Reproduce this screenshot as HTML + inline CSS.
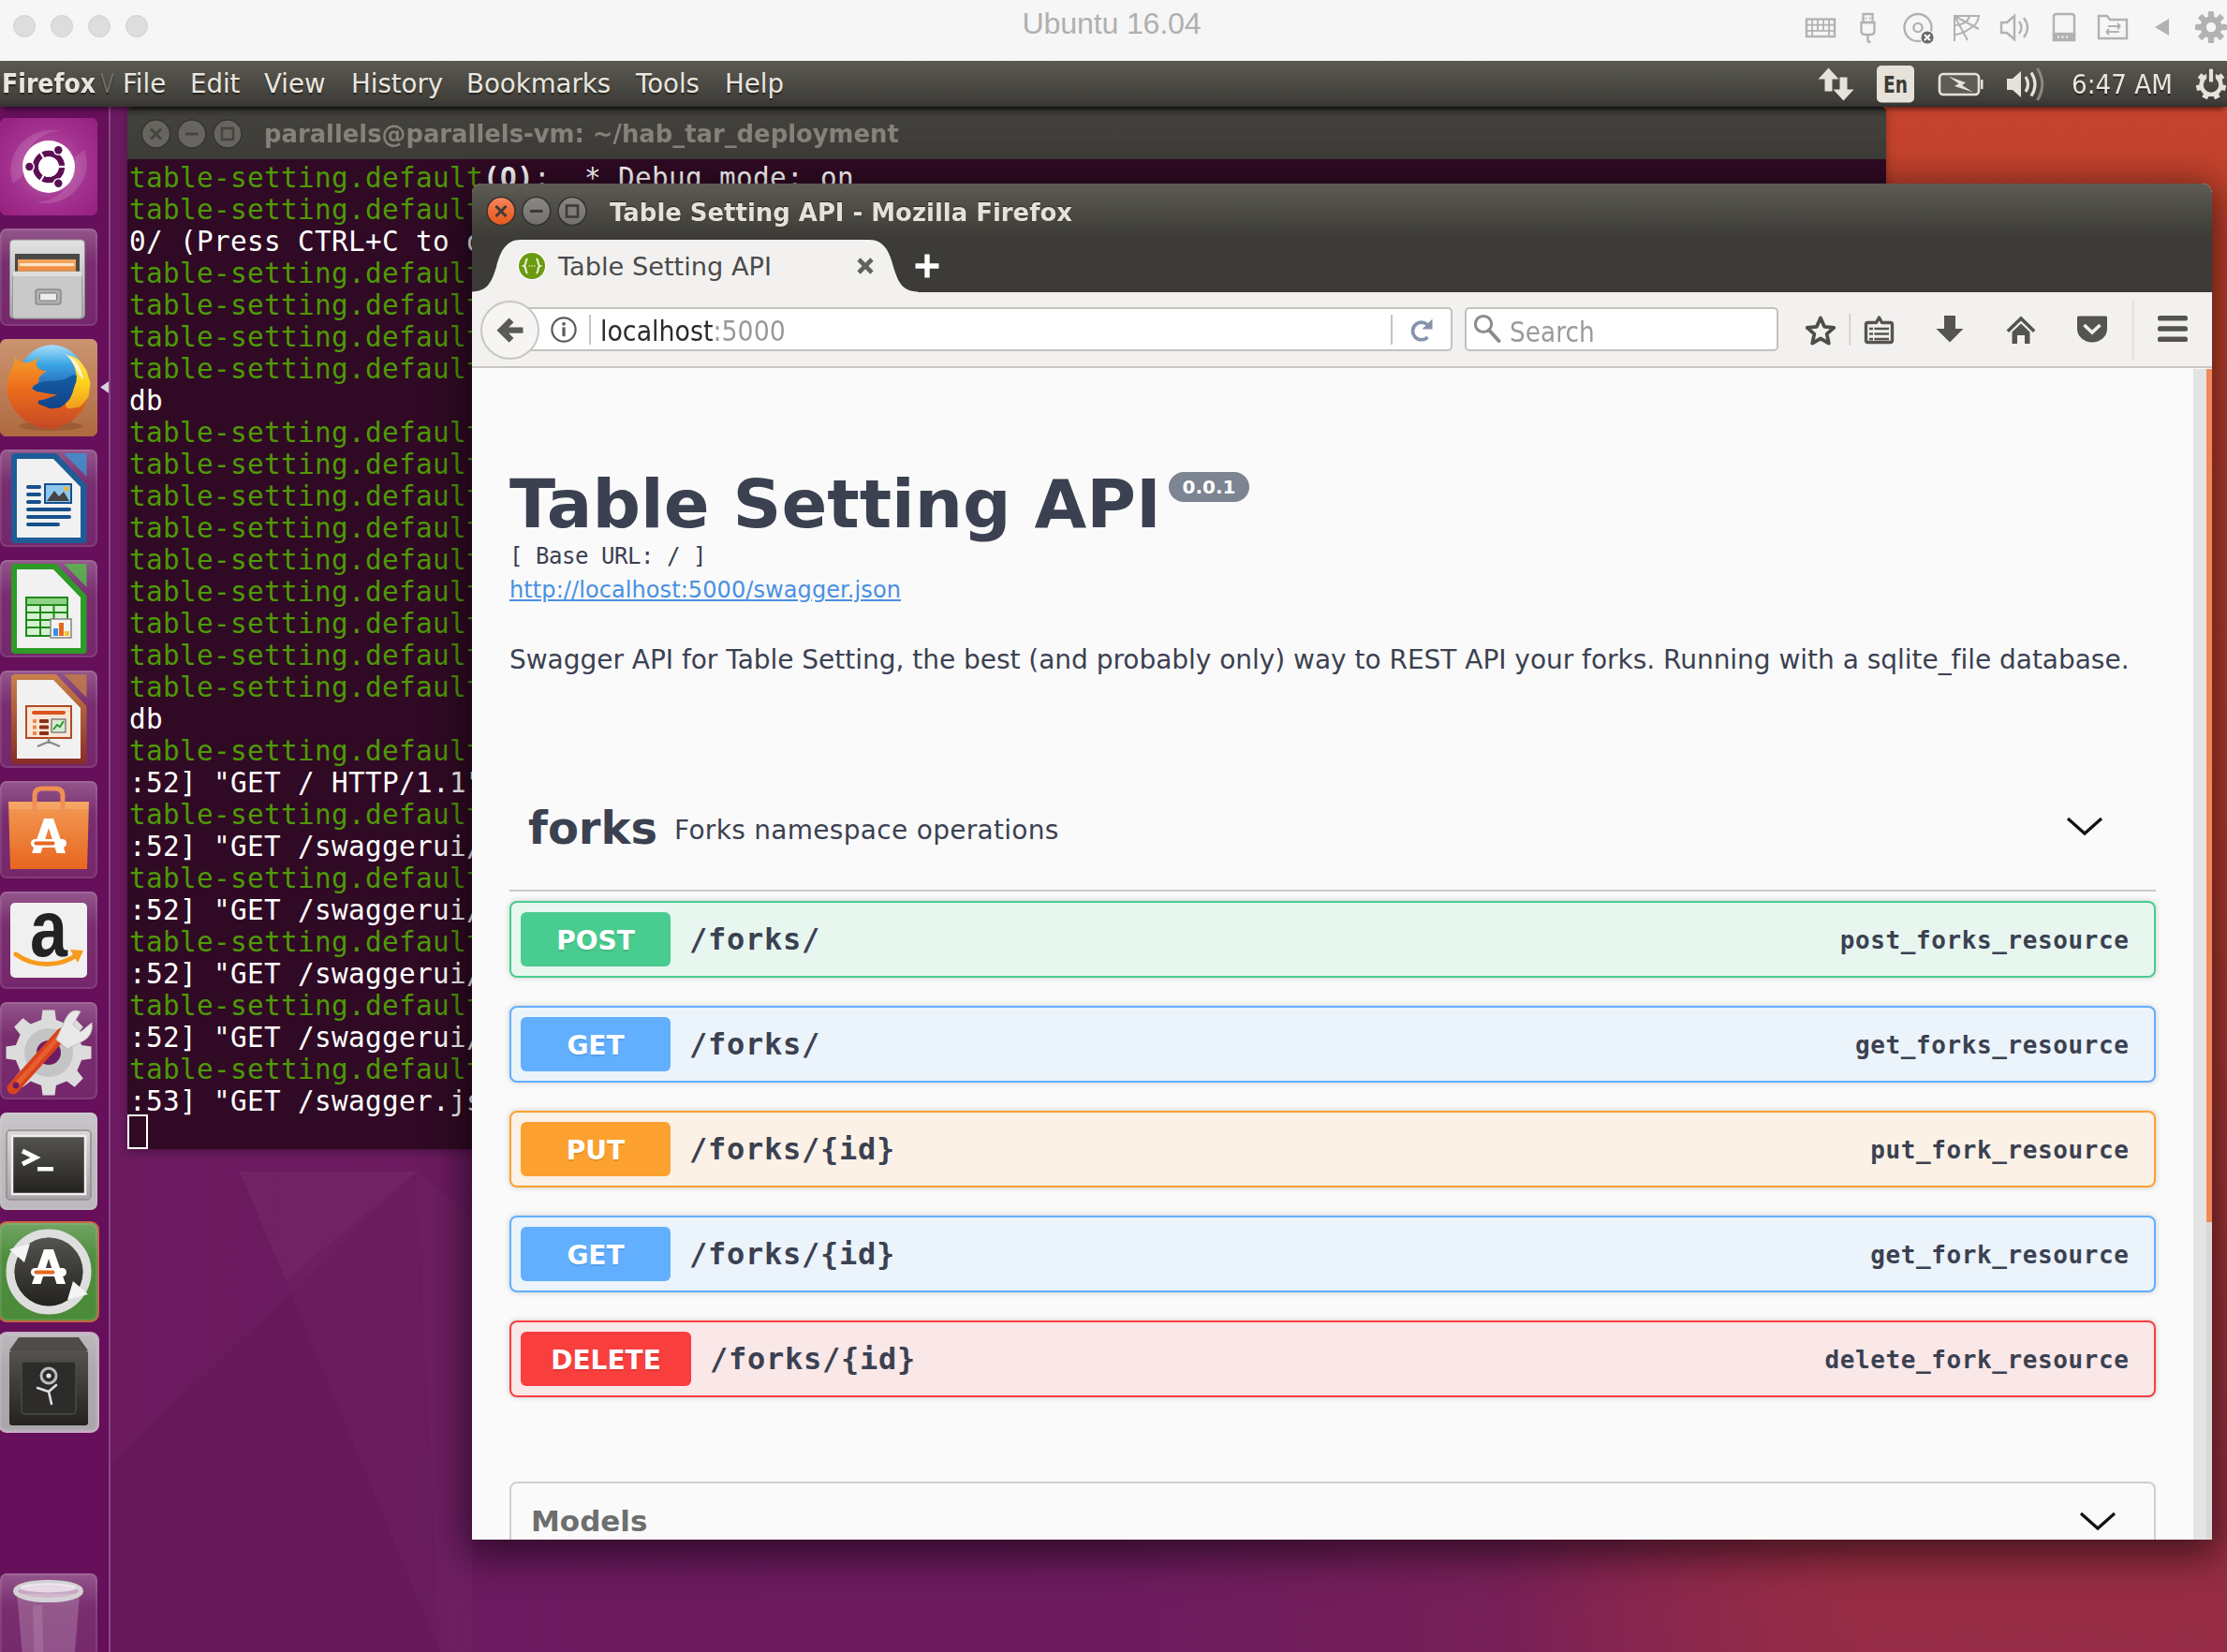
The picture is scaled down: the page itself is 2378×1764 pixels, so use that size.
<!DOCTYPE html>
<html lang="en">
<head>
<meta charset="utf-8">
<title>Ubuntu 16.04</title>
<style>
*{box-sizing:border-box}
html,body{margin:0;padding:0}
body{width:2378px;height:1764px;overflow:hidden;position:relative;background:#6b1a5f;font-family:"DejaVu Sans","Liberation Sans",sans-serif}
.abs{position:absolute}
/* wallpaper */
#wall{position:absolute;left:0;top:114px;width:2378px;height:1650px;background:linear-gradient(to right,#6b1a60 0,#6c1b5f 50%,#782058 68%,#8a264e 85%,#982d48 100%)}
#wallR{position:absolute;left:1600px;top:0;width:778px;height:1650px;background:linear-gradient(to bottom,#c4432d 0,#c2412c 10%,#b93c2d 45%,#a23338 75%,#962c47 100%);-webkit-mask-image:linear-gradient(to right,transparent 0,#000 50%);mask-image:linear-gradient(to right,transparent 0,#000 50%)}
/* mac bar */
#mac{position:absolute;left:0;top:0;width:2378px;height:65px;background:#f6f6f6}
#mac .dot{position:absolute;top:16px;width:24px;height:24px;border-radius:50%;background:#dddddd;border:1px solid #d2d2d2}
#mac .ttl{position:absolute;left:0;width:2374px;top:7px;text-align:center;font:32.2px "Liberation Sans",sans-serif;color:#b0b0b0;letter-spacing:-.2px}
/* ubuntu panel */
#panel{position:absolute;z-index:5;box-shadow:0 5px 6px -3px rgba(0,0,0,.6);left:0;top:65px;width:2378px;height:49px;background:linear-gradient(#5b5952,#403f3a 85%,#33322f);color:#e9e6df;font:27.6px "DejaVu Sans",sans-serif}
#panel span{position:absolute;top:8px;white-space:pre;text-shadow:0 2px 1px rgba(0,0,0,.45)}
/* launcher */
#launcher{position:absolute;left:0;top:114px;width:118px;height:1650px;background:#660f5b;border-right:2px solid #8a4a86;overflow:hidden}
.tile{position:absolute;left:1px;width:104px;height:104px;border-radius:12px;background:rgba(255,255,255,.16);box-shadow:inset 0 0 0 2px rgba(255,255,255,.18)}
/* terminal */
#term{position:absolute;left:136px;top:114px;width:1878px;height:1113px;background:#300a24;border-radius:6px 6px 0 0;overflow:hidden;box-shadow:0 3px 10px rgba(0,0,0,.3)}
#term .tb{position:absolute;left:0;top:0;width:100%;height:56px;background:linear-gradient(#1f1f1d 0,#3a3935 5px,#42413c 12px,#3d3c38 100%);}
#term .tb .t{position:absolute;left:146px;top:13px;font:bold 27px "DejaVu Sans",sans-serif;color:#85827b;white-space:pre;transform-origin:0 50%;transform:scaleX(.957)}
.wb{position:absolute;width:32px;height:32px;border-radius:50%}
#term pre{position:absolute;left:2px;top:59px;margin:0;font:29.33px/34px "DejaVu Sans Mono","Liberation Mono",monospace;letter-spacing:.34px;color:#fff}
#term pre .g{color:#4e9a06}
#term pre b{font-weight:bold}
/* firefox */
#ff{position:absolute;left:504px;top:196px;width:1858px;height:1448px;background:#fafafa;border-radius:10px 10px 0 0;overflow:hidden;box-shadow:0 10px 40px 8px rgba(0,0,0,.55)}
#ff .tb{position:absolute;left:0;top:0;width:100%;height:116px;background:linear-gradient(#5d5b54 0,#403f3a 50px,#3c3b37 60px,#3c3b37 100%)}
#ff .tb .t{position:absolute;left:147px;top:15px;transform-origin:0 50%;transform:scaleX(.96);font:bold 27px "DejaVu Sans",sans-serif;color:#e6e2da;white-space:pre;text-shadow:0 -1px 1px rgba(0,0,0,.5)}
#nav{position:absolute;left:0;top:116px;width:100%;height:81px;background:#f2f1f0;border-bottom:2px solid #c8c6c2}

/* firefox chrome */
#ff .tt{position:absolute;left:92px;top:73px;font:27.2px "DejaVu Sans",sans-serif;color:#4a4a48;white-space:pre}
#urlbar{position:absolute;left:50px;top:132px;width:997px;height:47px;background:#fff;border:2px solid #c4c1bd;border-radius:5px}
#urlbar .u{position:absolute;left:85px;top:7px;font:29.33px "DejaVu Sans",sans-serif;color:#2b2b2b;white-space:pre;transform-origin:0 50%;transform:scaleX(.915)}
#urlbar .u i{font-style:normal;color:#9a9a9a}
#search{position:absolute;left:1060px;top:132px;width:335px;height:47px;background:#fff;border:2px solid #c4c1bd;border-radius:5px}
#search .s{position:absolute;left:46px;top:8px;font:29.33px "DejaVu Sans",sans-serif;color:#9b9b9b;white-space:pre;transform-origin:0 50%;transform:scaleX(.9)}
#back{position:absolute;left:9px;top:125px;width:63px;height:63px;border-radius:50%;background:#f6f5f4;border:2px solid #c9c7c3}
/* swagger */
#sw{position:absolute;left:0;top:198px;width:1838px;height:1250px;background:#fafafa;color:#3b4151;font-family:"DejaVu Sans","Liberation Sans",sans-serif}
#sw .x{position:absolute;white-space:pre}
#sw h2{position:absolute;left:40px;top:102px;margin:0;font:bold 72px "DejaVu Sans",sans-serif;white-space:pre}
.mono{font-family:"DejaVu Sans Mono","Liberation Mono",monospace}
.op{position:absolute;left:40px;width:1758px;height:82px;border:2px solid;border-radius:8px;box-shadow:0 0 6px rgba(0,0,0,.19)}
.op .m{position:absolute;left:10px;top:10px;width:160px;height:58px;border-radius:6px;color:#fff;font:bold 28px/62px "DejaVu Sans",sans-serif;text-align:center;overflow:hidden;text-shadow:0 2px 0 rgba(0,0,0,.1)}
.op .p{position:absolute;left:190px;top:20px;font:bold 32px/38px "DejaVu Sans Mono",monospace;white-space:pre;letter-spacing:.74px}
.op .o{position:absolute;right:26.4px;top:24px;font:bold 26px/32px "DejaVu Sans Mono",monospace;white-space:pre;letter-spacing:.6px}
.post{border-color:#49cc90;background:#e8f6f0}.post .m{background:#49cc90}
.get{border-color:#61affe;background:#ebf3fb}.get .m{background:#61affe}
.put{border-color:#fca130;background:#fbf1e6}.put .m{background:#fca130}
.del{border-color:#f93e3e;background:#fae7e7}.del .m{background:#f93e3e;width:182px}.del .p{left:212px}
#sbt{position:absolute;left:1838px;top:198px;width:14px;height:1250px;background:#e4e4e4}
#sbh{position:absolute;left:1852px;top:198px;width:6px;height:1250px;background:#d9d8d6}
#sbh i{position:absolute;left:0;top:0;width:6px;height:911px;background:#f0885a}
</style>
</head>
<body>
<div id="wall"><div id="wallR"></div><svg class="abs" style="left:0;top:0" width="2378" height="1650" viewBox="0 114 2378 1650"><polygon points="256,1251 445,1251 305,1367" fill="rgba(255,255,255,.035)"/><polygon points="116,1566 445,1251 470,1764 116,1764" fill="rgba(0,0,0,.04)"/><polygon points="305,1367 445,1251 504,1300 504,1764 470,1764" fill="rgba(255,255,255,.02)"/></svg></div>
<div id="mac">
 <div class="dot" style="left:14px"></div><div class="dot" style="left:54px"></div><div class="dot" style="left:94px"></div><div class="dot" style="left:134px"></div>
 <div class="ttl">Ubuntu 16.04</div>
<svg class="abs" style="left:1900px;top:0" width="478" height="65" viewBox="0 0 478 65" fill="none" stroke="#b2b2b2" stroke-width="2.4">
 <g><rect x="29" y="20.5" width="30" height="18.5"/><path d="M29 26.6 h30 M29 32.8 h30 M35 20.5 v12.3 M41 20.5 v12.3 M47 20.5 v12.3 M53 20.5 v12.3 M35 32.8 v6 M53 32.8 v6" stroke-width="1.8"/></g>
 <g><rect x="89.5" y="15" width="10" height="9"/><path d="M87.5 24 h14 v9 q0 4 -4 4 h-6 q-4 0 -4 -4 Z M94.5 37 v6 q0 2 3 2"/><path d="M92.5 18.5 v2 M96.5 18.5 v2" stroke-width="1.6"/></g>
 <g><circle cx="148" cy="29.5" r="14.5"/><circle cx="148" cy="29.5" r="4.6"/></g>
 <circle cx="158" cy="40" r="7.2" fill="#6a6a6a" stroke="#f6f6f6" stroke-width="1.2"/><path d="M155 37 l6 6 M161 37 l-6 6" stroke="#fff" stroke-width="2"/>
 <g stroke-width="2"><path d="M187 16 V44 M186 17 L214 17 M187 17 L201 43 M187 17 L213 31 M213 17 C 212 26 207 28 204 30 C 200 33 196 36 188 37 M203 17 C 202 22 198 26 188 27"/></g>
 <g><path d="M237 24 h6 l8 -7 v25 l-8 -7 h-6 Z"/><path d="M256 23 q5 6.5 0 13 M261 19 q8 10.5 0 21"/></g>
 <g><path d="M293 42 V18 q0 -3 3 -3 h16 q3 0 3 3 V42 Z"/><rect x="293" y="36" width="22" height="7" fill="#b2b2b2"/></g><path d="M297 39.5 h2 M301.5 39.5 h2 M306 39.5 h2" stroke="#f6f6f6" stroke-width="2"/>
 <g><path d="M341 41 V17 h9 l3 4 h18 V41 Z"/><path d="M349 34 h14 M349 34 l3 -3 M349 34 l3 3 M364 28 h-13 M364 28 l-3 -3 M364 28 l-3 3" stroke-width="1.8"/></g>
 <path d="M416 20 V38 L401 29 Z" fill="#b2b2b2" stroke="none"/>
 <g fill="#b2b2b2" stroke="none"><circle cx="461" cy="29" r="11.5"/><g transform="translate(461 29)"><rect x="-3.2" y="-17" width="6.4" height="34" rx="1.5"/><rect x="-3.2" y="-17" width="6.4" height="34" rx="1.5" transform="rotate(45)"/><rect x="-3.2" y="-17" width="6.4" height="34" rx="1.5" transform="rotate(90)"/><rect x="-3.2" y="-17" width="6.4" height="34" rx="1.5" transform="rotate(135)"/></g><circle cx="461" cy="29" r="5.2" fill="#f6f6f6"/></g>
</svg>
</div>
<div id="panel">
 <span style="left:2px;font-weight:bold;transform-origin:0 50%;transform:scaleX(.915)">Firefox</span><span style="left:107px;color:#6f6c66;transform-origin:0 50%;transform:scaleX(.8)">V</span>
 <span style="left:131px">File</span><span style="left:203px">Edit</span><span style="left:282px">View</span><span style="left:375px">History</span><span style="left:498px">Bookmarks</span><span style="left:679px">Tools</span><span style="left:774px">Help</span>
 <span style="left:2212px;top:9px;transform-origin:0 50%;transform:scaleX(.95)">6:47 AM</span>
<svg class="abs" style="left:1900px;top:0" width="478" height="49" viewBox="0 0 478 49">
 <g fill="#e6e2da"><path d="M52.5 7.5 L63.5 19.5 H56.5 V32.5 H48.5 V19.5 H41.5 Z"/><path d="M68.5 42.5 L57.5 30.5 H64.5 V17.5 H72.5 V30.5 H79.5 Z"/></g>
 <rect x="104" y="5" width="40" height="39.5" rx="5" fill="#e6e2da"/>
 <text x="124" y="34" text-anchor="middle" font-family="DejaVu Sans,Liberation Sans,sans-serif" font-size="24" font-weight="bold" fill="#3c3b37" textLength="26" lengthAdjust="spacingAndGlyphs">En</text>
 <g><rect x="171" y="14" width="42" height="22" rx="4" fill="#5e5c57" stroke="#e6e2da" stroke-width="2.6"/><path d="M215 20 h2.5 v10 h-2.5 Z" fill="#e6e2da"/><path d="M180.5 16.5 L199 23.2 L195 26 L207 33.5 L187 27 L191.5 24.2 Z" fill="#e6e2da"/></g>
 <g><path d="M243 19 h6 l9 -8 v28 l-9 -8 h-6 Z" fill="#e6e2da"/><path d="M263 17 q5 8 0 16 M269 12.5 q8 12.5 0 25" fill="none" stroke="#e6e2da" stroke-width="3.2"/><path d="M275.5 8 q10.5 17 0 34" fill="none" stroke="#8b8882" stroke-width="3"/></g>
 <g transform="translate(461 25.5)"><circle r="10.4" fill="none" stroke="#e6e2da" stroke-width="4.4"/><g fill="#e6e2da"><rect x="-3" y="-16" width="6" height="7" transform="rotate(0.0)"/><rect x="-3" y="-16" width="6" height="7" transform="rotate(51.4)"/><rect x="-3" y="-16" width="6" height="7" transform="rotate(102.9)"/><rect x="-3" y="-16" width="6" height="7" transform="rotate(154.3)"/><rect x="-3" y="-16" width="6" height="7" transform="rotate(205.7)"/><rect x="-3" y="-16" width="6" height="7" transform="rotate(257.1)"/><rect x="-3" y="-16" width="6" height="7" transform="rotate(308.6)"/></g><rect x="-4.8" y="-18" width="9.6" height="15" fill="#4c4a45"/><rect x="-2.1" y="-17" width="4.2" height="14" rx="1" fill="#e6e2da"/></g>
</svg>
</div>
<div id="launcher">
<svg width="0" height="0" style="position:absolute"><defs>
<linearGradient id="lgGrey" x1="0" y1="0" x2="0" y2="1"><stop offset="0" stop-color="#e2e2e2"/><stop offset="1" stop-color="#a6a6a6"/></linearGradient>
<linearGradient id="lgTile" x1="0" y1="0" x2="0" y2="1"><stop offset="0" stop-color="rgba(255,255,255,.22)"/><stop offset=".35" stop-color="rgba(255,255,255,.03)"/><stop offset="1" stop-color="rgba(255,255,255,0)"/></linearGradient>
<radialGradient id="rgDash" cx=".5" cy=".5" r=".7"><stop offset="0" stop-color="#bd66b0"/><stop offset=".55" stop-color="#a3318f"/><stop offset="1" stop-color="#961f7e"/></radialGradient>
<linearGradient id="lgOr" x1="0" y1="0" x2="0" y2="1"><stop offset="0" stop-color="#f39a55"/><stop offset="1" stop-color="#e8661f"/></linearGradient>
<radialGradient id="rgFx" cx=".55" cy=".4" r=".6"><stop offset="0" stop-color="#5fc0ea"/><stop offset=".6" stop-color="#2a6fb8"/><stop offset="1" stop-color="#1c3f8a"/></radialGradient>
<linearGradient id="lgFox" x1="0" y1="0" x2="1" y2="1"><stop offset="0" stop-color="#f6a623"/><stop offset=".5" stop-color="#ee7a1c"/><stop offset="1" stop-color="#d9531a"/></linearGradient>
<linearGradient id="lgImp" x1="0" y1="0" x2="0" y2="1"><stop offset="0" stop-color="#c9804a"/><stop offset="1" stop-color="#872c24"/></linearGradient>
<linearGradient id="lgDark" x1="0" y1="0" x2="0" y2="1"><stop offset="0" stop-color="#55534f"/><stop offset="1" stop-color="#23221f"/></linearGradient>
<linearGradient id="lgLt" x1="0" y1="0" x2="0" y2="1"><stop offset="0" stop-color="#d9d7d9"/><stop offset="1" stop-color="#a9a4a9"/></linearGradient>
</defs></svg>
<svg class="abs" style="left:-2px;top:10px" width="108" height="108" viewBox="-2 -2 108 108"><rect x="0" y="0" width="104" height="104" rx="7" fill="rgba(255,255,255,.10)"/><rect x="0" y="0" width="104" height="104" rx="7" fill="url(#lgTile)"/><rect x="1" y="1" width="102" height="102" rx="6" fill="none" stroke="rgba(255,255,255,.10)" stroke-width="2"/><rect x="0" y="0" width="104" height="104" rx="7" fill="url(#rgDash)"/><path d="M14 70 C2 40 30 6 66 14 C40 14 22 36 24 62 Z M90 34 C102 64 74 98 38 90 C64 90 82 68 80 42 Z" fill="rgba(255,255,255,.13)"/><circle cx="52" cy="52" r="28" fill="#fff"/><circle cx="52" cy="52" r="14" fill="none" stroke="#5c0f55" stroke-width="6.4"/><path d="M52 52 L71.0 52.0" stroke="#fff" stroke-width="2.2"/><path d="M52 52 L42.5 35.5" stroke="#fff" stroke-width="2.2"/><path d="M52 52 L42.5 68.5" stroke="#fff" stroke-width="2.2"/><circle cx="31.4" cy="52.0" r="5.6" fill="#fff"/><circle cx="31.4" cy="52.0" r="4.2" fill="#5c0f55"/><circle cx="62.3" cy="34.2" r="5.6" fill="#fff"/><circle cx="62.3" cy="34.2" r="4.2" fill="#5c0f55"/><circle cx="62.3" cy="69.8" r="5.6" fill="#fff"/><circle cx="62.3" cy="69.8" r="4.2" fill="#5c0f55"/><circle cx="52" cy="52" r="10.8" fill="#fff"/></svg>
<svg class="abs" style="left:-2px;top:128px" width="108" height="108" viewBox="-2 -2 108 108"><rect x="0" y="0" width="104" height="104" rx="7" fill="rgba(255,255,255,.10)"/><rect x="0" y="0" width="104" height="104" rx="7" fill="url(#lgTile)"/><rect x="1" y="1" width="102" height="102" rx="6" fill="none" stroke="rgba(255,255,255,.10)" stroke-width="2"/><rect x="10.5" y="12" width="80" height="84" rx="4" fill="url(#lgGrey)" stroke="#8c8c8c" stroke-width="1"/><rect x="16" y="27" width="69" height="20" fill="#4b4946"/><path d="M19 33 h62 v14 h-62 Z" fill="#f2a35a"/><path d="M21 37 h58 v3 h-58 Z" fill="#fce3c4"/><path d="M19 41 h62 v6 h-62 Z" fill="#ee8f45"/><rect x="13.5" y="46" width="74" height="50" rx="3" fill="#c9c9c9" stroke="#9a9a9a"/><rect x="13.5" y="46" width="74" height="5" fill="#dedede"/><rect x="38" y="65" width="27" height="16" rx="3" fill="#b0b0b0" stroke="#8a8a8a" stroke-width="1.5"/><rect x="42.5" y="69" width="18" height="8" rx="1.5" fill="#ececec" stroke="#777" stroke-width="1"/></svg>
<svg class="abs" style="left:-2px;top:246px" width="108" height="108" viewBox="-2 -2 108 108"><rect x="0" y="0" width="104" height="104" rx="7" fill="#bf7a52"/><rect x="1" y="1" width="102" height="102" rx="6" fill="none" stroke="rgba(255,255,255,.10)" stroke-width="2"/><defs><linearGradient id="fxT" x1="0" y1="0" x2="0" y2="1"><stop offset="0" stop-color="#cb9472"/><stop offset="1" stop-color="#af6a3e"/></linearGradient><linearGradient id="fxG" x1="0" y1="0" x2="0" y2="1"><stop offset="0" stop-color="#a8defa"/><stop offset=".3" stop-color="#3aa7e4"/><stop offset=".6" stop-color="#2a6fc0"/><stop offset="1" stop-color="#1a1f6a"/></linearGradient><linearGradient id="fxF" x1="0" y1="0" x2="0" y2="1"><stop offset="0" stop-color="#f5a02a"/><stop offset=".45" stop-color="#ec6d1c"/><stop offset="1" stop-color="#c64824"/></linearGradient><linearGradient id="fxY" x1="0" y1="0" x2="0" y2="1"><stop offset="0" stop-color="#fde860"/><stop offset=".5" stop-color="#fbd41c"/><stop offset="1" stop-color="#f39a1e"/></linearGradient></defs><rect x="0" y="0" width="104" height="104" rx="7" fill="url(#fxT)"/><ellipse cx="54" cy="93" rx="34" ry="5" fill="rgba(80,30,10,.22)"/><circle cx="55.5" cy="40.9" r="34.6" fill="url(#fxG)"/><path d="M37.0 50.4 C39.3 47.6 38.0 48.3 44.1 46.4 C50.1 44.6 47.2 45.9 55.1 44.8 C62.9 43.8 59.8 45.4 67.7 43.3 C75.5 41.2 74.1 38.6 78.7 38.6 C83.3 38.6 81.2 39.1 81.4 43.3 C81.7 47.5 81.4 44.8 79.5 51.1 C77.5 57.4 78.9 56.0 75.5 62.2 C72.1 68.3 75.0 65.6 69.2 69.6 C63.5 73.6 65.6 73.5 58.2 74.1 C50.9 74.8 53.0 74.0 47.2 71.6 C41.4 69.2 40.4 69.4 40.9 66.9 C41.4 64.4 42.0 66.6 48.8 64.1 C55.6 61.6 61.4 59.4 61.4 59.4 C61.4 59.4 55.3 59.0 47.2 57.4 C39.1 55.9 40.4 57.0 37.0 54.7 C33.6 52.3 34.6 53.1 37.0 50.4 Z" fill="#0d4f90" opacity=".75"/><path d="M16.1 17.5 C16.1 17.5 17.0 24.8 26.0 25.2 C34.9 25.5 42.9 18.5 42.9 18.5 C42.9 18.5 36.8 23.9 39.3 29.1 C41.8 34.4 50.4 34.2 50.4 34.2 C50.4 34.2 46.0 36.1 42.9 40.1 C39.7 44.2 43.4 43.0 40.9 46.4 C38.4 49.8 36.7 47.6 35.4 50.4 C34.1 53.1 33.0 52.3 37.0 54.7 C40.9 57.0 39.1 55.9 47.2 57.4 C55.3 59.0 61.4 59.4 61.4 59.4 C61.4 59.4 55.6 61.6 48.8 64.1 C42.0 66.6 41.4 64.4 40.9 66.9 C40.4 69.4 41.4 69.2 47.2 71.6 C53.0 74.0 50.9 74.8 58.2 74.1 C65.6 73.5 63.5 73.6 69.2 69.6 C75.0 65.6 72.1 68.3 75.5 62.2 C78.9 56.0 77.4 57.4 79.5 51.1 C81.6 44.8 81.3 48.5 81.8 43.3 C82.3 38.0 82.3 41.2 81.0 35.4 C79.7 29.6 80.5 31.7 77.9 26.0 C75.3 20.2 73.2 18.1 73.2 18.1 C73.2 18.1 75.3 16.9 80.3 20.1 C85.2 23.2 83.4 20.9 88.1 27.5 C92.8 34.2 91.9 31.5 94.4 40.1 C96.9 48.8 96.6 44.1 95.6 53.5 C94.5 62.9 95.9 58.7 91.3 68.5 C86.7 78.2 89.7 74.7 81.8 82.6 C74.0 90.5 77.6 87.8 67.7 92.1 C57.7 96.3 62.9 95.6 51.9 95.4 C40.9 95.1 45.1 96.0 34.6 91.3 C24.1 86.5 28.3 89.2 20.5 81.0 C12.6 72.9 15.2 76.8 11.0 66.9 C6.8 56.9 8.1 61.1 7.9 51.1 C7.6 41.2 7.9 45.4 10.2 37.0 C12.6 28.6 13.0 32.5 14.9 26.0 C16.9 19.5 16.1 17.5 16.1 17.5 Z" fill="url(#fxF)"/><path d="M77.9 26.0 C75.3 20.2 73.2 18.1 73.2 18.1 C73.2 18.1 75.3 16.9 80.3 20.1 C85.2 23.2 83.4 20.9 88.1 27.5 C92.8 34.2 91.9 31.5 94.4 40.1 C96.9 48.8 96.9 44.6 95.6 53.5 C94.3 62.4 96.1 60.2 90.5 66.9 C84.8 73.6 85.5 72.3 78.7 73.6 C71.9 74.9 71.1 74.6 70.0 70.8 C69.0 67.0 72.4 68.7 75.5 62.2 C78.7 55.6 77.4 57.4 79.5 51.1 C81.6 44.8 81.3 48.5 81.8 43.3 C82.3 38.0 82.3 41.2 81.0 35.4 C79.7 29.6 80.5 31.7 77.9 26.0 Z" fill="url(#fxY)"/><path d="M69.2 15.3 C69.2 15.3 74.0 17.2 79.5 22.8 C85.0 28.5 82.6 25.4 85.8 32.3 C88.9 39.1 88.9 43.3 88.9 43.3 C88.9 43.3 88.4 43.8 85.0 38.6 C81.6 33.3 82.3 33.6 78.7 27.5 C75.0 21.5 77.1 24.5 74.0 20.5 C70.8 16.4 69.2 15.3 69.2 15.3 Z" fill="#fff6d8" opacity=".9"/></svg>
<svg class="abs" style="left:-2px;top:364px" width="108" height="108" viewBox="-2 -2 108 108"><rect x="0" y="0" width="104" height="104" rx="7" fill="rgba(255,255,255,.10)"/><rect x="0" y="0" width="104" height="104" rx="7" fill="url(#lgTile)"/><rect x="1" y="1" width="102" height="102" rx="6" fill="none" stroke="rgba(255,255,255,.10)" stroke-width="2"/><path d="M12 8 Q12 4 16 4 L60 4 L92.5 38 L92.5 96 Q92.5 100 88.5 100 L16 100 Q12 100 12 96 Z" fill="#1d5c96"/><path d="M18 10 L57 10 L86 40 L86 94 L18 94 Z" fill="#f1f1f1"/><path d="M68 4 L92.5 4 L92.5 29 Z" fill="#3f8fd0" opacity=".85"/><g fill="#16508c"><rect x="28" y="38" width="16" height="4" rx="2"/><rect x="28" y="46" width="16" height="4" rx="2"/><rect x="28" y="54" width="16" height="4" rx="2"/><rect x="28" y="62" width="48" height="4" rx="2"/><rect x="28" y="70" width="48" height="4" rx="2"/><rect x="28" y="78" width="36" height="4" rx="2"/></g><rect x="48" y="37" width="28" height="20" fill="#8ec6ee" stroke="#16508c" stroke-width="2"/><path d="M50 55 L58 44 L63 50 L68 45 L74 55 Z" fill="#444"/><circle cx="71" cy="42" r="2.5" fill="#f5b42a"/></svg>
<svg class="abs" style="left:-2px;top:482px" width="108" height="108" viewBox="-2 -2 108 108"><rect x="0" y="0" width="104" height="104" rx="7" fill="rgba(255,255,255,.10)"/><rect x="0" y="0" width="104" height="104" rx="7" fill="url(#lgTile)"/><rect x="1" y="1" width="102" height="102" rx="6" fill="none" stroke="rgba(255,255,255,.10)" stroke-width="2"/><path d="M12 8 Q12 4 16 4 L60 4 L92.5 38 L92.5 96 Q92.5 100 88.5 100 L16 100 Q12 100 12 96 Z" fill="#2e9a27"/><path d="M18 10 L57 10 L86 40 L86 94 L18 94 Z" fill="#f1f1f1"/><path d="M68 4 L92.5 4 L92.5 29 Z" fill="#58b84c" opacity=".85"/><g transform="translate(0,-15)"><rect x="28" y="56" width="44" height="41" fill="#d6f0d2" stroke="#1f8a1a" stroke-width="2" transform="translate(0,-1)"/><g stroke="#1f8a1a" stroke-width="2"><path d="M28 63 h44 M28 71 h44 M28 79 h44 M28 87 h44 M43 55 v41 M57.5 55 v41"/></g><rect x="29" y="56" width="42" height="6" fill="#8fd486"/><rect x="54" y="78" width="22" height="20" fill="#f4f4f4" stroke="#8a8a8a" stroke-width="1.6"/><rect x="57" y="88" width="5" height="8" fill="#3a8ee0"/><rect x="63" y="82" width="5" height="14" fill="#e8661f"/><rect x="69" y="91" width="5" height="5" fill="#f5c12a"/></g></svg>
<svg class="abs" style="left:-2px;top:600px" width="108" height="108" viewBox="-2 -2 108 108"><rect x="0" y="0" width="104" height="104" rx="7" fill="rgba(255,255,255,.10)"/><rect x="0" y="0" width="104" height="104" rx="7" fill="url(#lgTile)"/><rect x="1" y="1" width="102" height="102" rx="6" fill="none" stroke="rgba(255,255,255,.10)" stroke-width="2"/><path d="M12 8 Q12 4 16 4 L60 4 L92.5 38 L92.5 96 Q92.5 100 88.5 100 L16 100 Q12 100 12 96 Z" fill="url(#lgImp)"/><path d="M18 10 L57 10 L86 40 L86 94 L18 94 Z" fill="#f1f1f1"/><path d="M68 4 L92.5 4 L92.5 29 Z" fill="#c07a4a" opacity=".85"/><rect x="28" y="38" width="48" height="34" fill="#fbe6d6" stroke="#b04a22" stroke-width="2"/><rect x="34" y="43" width="36" height="4" rx="2" fill="#d9541e"/><g fill="#8a2f1a"><rect x="42" y="52" width="10" height="4" rx="1"/><rect x="42" y="58.5" width="10" height="4" rx="1"/><rect x="42" y="65" width="10" height="4" rx="1"/></g><g fill="#f08a4a"><rect x="35" y="52" width="4" height="4"/><rect x="35" y="58.5" width="4" height="4"/><rect x="35" y="65" width="4" height="4"/></g><rect x="55" y="52" width="15" height="14" fill="#d8ecd2" stroke="#777" stroke-width="1.4"/><path d="M57 63 L61 58 L64 60 L68 54" stroke="#2a9a2a" stroke-width="2" fill="none"/><path d="M52 72 v6 M52 76 L40 81 M52 76 L64 81" stroke="#8a8a8a" stroke-width="2.4" fill="none"/></svg>
<svg class="abs" style="left:-2px;top:718px" width="108" height="108" viewBox="-2 -2 108 108"><rect x="0" y="0" width="104" height="104" rx="7" fill="rgba(255,255,255,.10)"/><rect x="0" y="0" width="104" height="104" rx="7" fill="url(#lgTile)"/><rect x="1" y="1" width="102" height="102" rx="6" fill="none" stroke="rgba(255,255,255,.10)" stroke-width="2"/><path d="M9 22 L95 22 L93 94 L11 94 Z" fill="url(#lgOr)"/><path d="M9 22 L95 22 L94 30 L10 30 Z" fill="#f6ad72" opacity=".6"/><path d="M37 36 V16 Q37 8 45 8 H59 Q67 8 67 16 V36" fill="none" stroke="#f08f55" stroke-width="5"/><path d="M47 40 h10 l13 37 h-9.5 l-8.5 -27 l-8.5 27 h-9.5 Z" fill="#fff"/><rect x="33" y="62" width="38" height="9" rx="4.5" fill="#fff"/><rect x="36.5" y="64.5" width="22" height="4" rx="2" fill="#e8661f"/></svg>
<svg class="abs" style="left:-2px;top:836px" width="108" height="108" viewBox="-2 -2 108 108"><rect x="0" y="0" width="104" height="104" rx="7" fill="rgba(255,255,255,.10)"/><rect x="0" y="0" width="104" height="104" rx="7" fill="url(#lgTile)"/><rect x="1" y="1" width="102" height="102" rx="6" fill="none" stroke="rgba(255,255,255,.10)" stroke-width="2"/><rect x="11" y="12" width="82" height="80" rx="5" fill="#f0f0f0"/><rect x="11" y="12" width="82" height="80" rx="5" fill="url(#lgTile)" opacity=".4"/><text x="32" y="69" font-family="Liberation Sans,DejaVu Sans,sans-serif" font-weight="bold" font-size="86" fill="#222" textLength="40" lengthAdjust="spacingAndGlyphs">a</text><path d="M17 67 C36 81 64 81 83 67" fill="none" stroke="#f79b1e" stroke-width="5" stroke-linecap="round"/><path d="M75 62 L89 63 L83 76 Z" fill="#f79b1e"/></svg>
<svg class="abs" style="left:-2px;top:954px" width="108" height="108" viewBox="-2 -2 108 108"><rect x="0" y="0" width="104" height="104" rx="7" fill="rgba(255,255,255,.10)"/><rect x="0" y="0" width="104" height="104" rx="7" fill="url(#lgTile)"/><rect x="1" y="1" width="102" height="102" rx="6" fill="none" stroke="rgba(255,255,255,.10)" stroke-width="2"/><polygon points="87.1,46.1 97.5,47.5 97.5,60.5 87.1,61.9 82.4,73.3 88.8,81.6 79.6,90.8 71.3,84.4 59.9,89.1 58.5,99.5 45.5,99.5 44.1,89.1 32.7,84.4 24.4,90.8 15.2,81.6 21.6,73.3 16.9,61.9 6.5,60.5 6.5,47.5 16.9,46.1 21.6,34.7 15.2,26.4 24.4,17.2 32.7,23.6 44.1,18.9 45.5,8.5 58.5,8.5 59.9,18.9 71.3,23.6 79.6,17.2 88.8,26.4 82.4,34.7" fill="#dcdcdc"/><circle cx="52" cy="54" r="26" fill="#c4c4c4"/><circle cx="52" cy="54" r="13" fill="#6b1c62"/><path d="M14 92 L66 34" stroke="#d8431d" stroke-width="13" stroke-linecap="round"/><path d="M16 90 L64 36" stroke="#ee6a3a" stroke-width="5" stroke-linecap="round" opacity=".7"/><circle cx="17" cy="89" r="3.4" fill="#6b1c62"/><path d="M60 40 L70 18 Q76 6 86 10 L78 24 L86 32 L98 22 Q100 36 88 42 L72 50 Z" fill="#e9e9e9" stroke="#bdbdbd" stroke-width="1"/></svg>
<svg class="abs" style="left:-2px;top:1072px" width="108" height="108" viewBox="-2 -2 108 108"><rect x="0" y="0" width="104" height="104" rx="7" fill="#bcb8bc"/><rect x="0" y="0" width="104" height="104" rx="7" fill="url(#lgTile)"/><rect x="1" y="1" width="102" height="102" rx="6" fill="none" stroke="rgba(255,255,255,.10)" stroke-width="2"/><rect x="7" y="19" width="90" height="74" rx="4" fill="url(#lgLt)" stroke="#8f8b8f" stroke-width="1.5"/><rect x="13" y="25" width="78" height="62" fill="url(#lgDark)" stroke="#efefef" stroke-width="2.5"/><path d="M24 41 L38 48 L24 55" fill="none" stroke="#fff" stroke-width="5"/><rect x="40" y="58" width="17" height="4.5" fill="#fff"/></svg>
<svg class="abs" style="left:-2px;top:1190px" width="108" height="108" viewBox="-2 -2 108 108"><rect x="-2" y="-2" width="108" height="108" rx="9" fill="#d9763c" opacity=".85"/><rect x="0" y="0" width="104" height="104" rx="7" fill="#4a8a38"/><rect x="0" y="0" width="104" height="104" rx="7" fill="url(#lgTile)"/><rect x="1" y="1" width="102" height="102" rx="6" fill="none" stroke="rgba(255,255,255,.10)" stroke-width="2"/><circle cx="52" cy="52" r="41" fill="none" stroke="#dedede" stroke-width="9"/><circle cx="52" cy="52" r="36.5" fill="url(#lgDark)"/><path d="M10 28 L32 22 L26 42 Z M94 76 L72 82 L78 62 Z" fill="#f4f4f4"/><path d="M47 28 h10 l13 37 h-9.5 l-8.5 -27 l-8.5 27 h-9.5 Z" fill="#fff"/><rect x="33" y="48" width="38" height="9" rx="4.5" fill="#fff"/><rect x="36.5" y="50.5" width="22" height="4" rx="2" fill="#e8661f"/></svg>
<svg class="abs" style="left:-2px;top:1308px" width="108" height="108" viewBox="-2 -2 108 108"><rect x="-2" y="-2" width="108" height="108" rx="9" fill="#e3d6e3" opacity=".8"/><rect x="0" y="0" width="104" height="104" rx="7" fill="#aaa6aa"/><rect x="0" y="0" width="104" height="104" rx="7" fill="url(#lgTile)"/><rect x="1" y="1" width="102" height="102" rx="6" fill="none" stroke="rgba(255,255,255,.10)" stroke-width="2"/><path d="M20 4 L84 4 L94 18 L10 18 Z" fill="#4e4c49"/><rect x="10" y="18" width="84" height="80" rx="3" fill="url(#lgDark)"/><rect x="23" y="30" width="58" height="56" rx="4" fill="#2d2c2a" stroke="#4a4946" stroke-width="1.5"/><circle cx="52" cy="45" r="8" fill="none" stroke="#bdbdbd" stroke-width="3"/><circle cx="52" cy="45" r="2.6" fill="#e6e6e6"/><path d="M52 62 L40 58 M52 62 L60 55 M52 62 L55 75" stroke="#e0e0e0" stroke-width="2.6" stroke-linecap="round"/></svg>
<svg class="abs" style="left:-2px;top:1564px" width="108" height="108" viewBox="-2 -2 108 108"><rect x="0" y="0" width="104" height="104" rx="7" fill="rgba(255,255,255,.10)"/><rect x="0" y="0" width="104" height="104" rx="7" fill="url(#lgTile)"/><rect x="1" y="1" width="102" height="102" rx="6" fill="none" stroke="rgba(255,255,255,.10)" stroke-width="2"/><path d="M18 22 L85 22 L78 110 L26 110 Z" fill="rgba(255,255,255,.2)"/><ellipse cx="51.5" cy="19" rx="35" ry="9.5" fill="rgba(255,255,255,.55)" stroke="#d4d2d4" stroke-width="5"/><ellipse cx="51.5" cy="15.5" rx="30" ry="5" fill="rgba(255,255,255,.55)"/><path d="M40 34 L42 110" stroke="rgba(255,255,255,.12)" stroke-width="10"/></svg>
<svg class="abs" style="left:106.5px;top:293px" width="9.5" height="13" viewBox="0 0 10 20" preserveAspectRatio="none"><path d="M10 0 L10 20 L0 10 Z" fill="#dcd3dc"/></svg>
</div>
<div id="term">
 <div class="tb"><svg class="abs" style="left:0;top:4px" width="140" height="52" viewBox="0 0 140 52"><g fill="#67655f" stroke="#35342f" stroke-width="1.4"><circle cx="30.5" cy="25" r="15"/><circle cx="68.8" cy="25" r="15"/><circle cx="107" cy="25" r="15"/></g><path d="M25 19.5 L36 30.5 M36 19.5 L25 30.5 M62 25 H75.5" stroke="#45443f" stroke-width="3" fill="none"/><rect x="101" y="19" width="12" height="12" fill="none" stroke="#45443f" stroke-width="2.6"/></svg><div class="t">parallels@parallels-vm: ~/hab_tar_deployment</div></div>
<pre><span class="g">table-setting.default</span><b>(O)</b>:  * Debug mode: on
<span class="g">table-setting.default</span><b>(O)</b>:  * Running on 0.0.0.0:500
0/ (Press CTRL+C to quit)
<span class="g">table-setting.default</span><b>(O)</b>:  * Restarting with stat
<span class="g">table-setting.default</span><b>(O)</b>:  * Debugger is active!
<span class="g">table-setting.default</span><b>(O)</b>:  * Debugger PIN: 208-551-412
<span class="g">table-setting.default</span><b>(O)</b>: INFO  [alembic.runtime.migration] Context impl SQLiteImpl. /hab/svc/table-setting/data/table_setting.
db
<span class="g">table-setting.default</span><b>(O)</b>: INFO  [alembic.runtime.migration] Will assume non-transactional DDL.
<span class="g">table-setting.default</span><b>(O)</b>:  * Debug mode: on
<span class="g">table-setting.default</span><b>(O)</b>:  * Running on 0.0.0.0:5000/
<span class="g">table-setting.default</span><b>(O)</b>:  * Restarting with stat
<span class="g">table-setting.default</span><b>(O)</b>:  * Debugger is active!
<span class="g">table-setting.default</span><b>(O)</b>:  * Debugger PIN: 208-551-412
<span class="g">table-setting.default</span><b>(O)</b>: INFO  [alembic.runtime.migration] Context impl SQLiteImpl.
<span class="g">table-setting.default</span><b>(O)</b>: INFO  [alembic.runtime.migration] Will assume non-transactional DDL.
<span class="g">table-setting.default</span><b>(O)</b>: Using sqlite_file database at /hab/svc/table-setting/data/table_setting.
db
<span class="g">table-setting.default</span><b>(O)</b>: 10.211.55.2 - - [12/Oct/2017 06:46
:52] "GET / HTTP/1.1" 200 -
<span class="g">table-setting.default</span><b>(O)</b>: 10.211.55.2 - - [12/Oct/2017 06:46
:52] "GET /swaggerui/bower/swagger-ui/dist/css/typography.css HTTP/1.1" 200 -
<span class="g">table-setting.default</span><b>(O)</b>: 10.211.55.2 - - [12/Oct/2017 06:46
:52] "GET /swaggerui/bower/swagger-ui/dist/swagger-ui.css HTTP/1.1" 200 -
<span class="g">table-setting.default</span><b>(O)</b>: 10.211.55.2 - - [12/Oct/2017 06:46
:52] "GET /swaggerui/bower/swagger-ui/dist/swagger-ui-bundle.js HTTP/1.1" 200 -
<span class="g">table-setting.default</span><b>(O)</b>: 10.211.55.2 - - [12/Oct/2017 06:46
:52] "GET /swaggerui/bower/swagger-ui/dist/swagger-ui-standalone-preset.js HTTP/1.1" 200 -
<span class="g">table-setting.default</span><b>(O)</b>: 10.211.55.2 - - [12/Oct/2017 06:46
:53] "GET /swagger.json HTTP/1.1" 200 -
</pre>
 <div class="abs" style="left:0;top:1076px;width:22px;height:37px;border:2px solid #fff"></div>
</div>
<div id="ff">
 <div class="tb"><div class="t">Table Setting API - Mozilla Firefox</div>
  <svg class="abs" style="left:0;top:0" width="140" height="60" viewBox="0 0 140 60">
   <defs>
    <linearGradient id="gc" x1="0" y1="0" x2="0" y2="1"><stop offset="0" stop-color="#f58a63"/><stop offset=".5" stop-color="#ee6a35"/><stop offset="1" stop-color="#e45b1d"/></linearGradient>
    <linearGradient id="gg" x1="0" y1="0" x2="0" y2="1"><stop offset="0" stop-color="#8a8883"/><stop offset="1" stop-color="#72706c"/></linearGradient>
   </defs>
   <circle cx="31" cy="29.5" r="15" fill="url(#gc)" stroke="#3a332c" stroke-width="1.6"/>
   <path d="M25.5 24 L36.5 35 M36.5 24 L25.5 35" stroke="#3d3a35" stroke-width="3" fill="none"/>
   <circle cx="68.7" cy="29.5" r="15" fill="url(#gg)" stroke="#33322f" stroke-width="1.6"/>
   <path d="M62 29.5 H75.5" stroke="#3d3b38" stroke-width="3"/>
   <circle cx="107" cy="29.5" r="15" fill="url(#gg)" stroke="#33322f" stroke-width="1.6"/>
   <rect x="101" y="23.5" width="12" height="12" fill="#7e7c78" stroke="#3d3b38" stroke-width="2.6"/>
  </svg>
  <svg class="abs" style="left:0;top:60px" width="480" height="56" viewBox="0 0 480 56"><path d="M0 56 L0 55.4 C17 55 21 45 26 29 C30 13 36 0 52 0 L424 0 C440 0 446 13 450 29 C455 45 459 55 476 55.4 L476 56 Z" fill="#f2f1f0"/></svg>
  <svg class="abs" style="left:48px;top:72px" width="32" height="32" viewBox="0 0 32 32"><circle cx="16" cy="16" r="15.5" fill="#fbfbf8"/><circle cx="16" cy="16" r="14" fill="#6a9a0f"/><path d="M11.5 8.5 C8.5 8.5 10.5 15 7.5 16 C10.5 17 8.5 23.5 11.5 23.5 M20.5 8.5 C23.5 8.5 21.5 15 24.5 16 C21.5 17 23.5 23.5 20.5 23.5" fill="none" stroke="#eef3df" stroke-width="2"/><path d="M12.5 16h1.6M15.2 16h1.6M17.9 16h1.6" stroke="#cfe0a6" stroke-width="1.6"/></svg>
  <div class="tt">Table Setting API</div>
  <svg class="abs" style="left:406px;top:74px" width="28" height="28" viewBox="0 0 28 28"><path d="M7 7 L21 21 M21 7 L7 21" stroke="#62615e" stroke-width="4.6" fill="none"/></svg>
  <svg class="abs" style="left:470px;top:72px" width="32" height="32" viewBox="0 0 32 32"><path d="M16 3.5 V28.5 M3.5 16 H28.5" stroke="#fff" stroke-width="5.4" fill="none"/></svg>
 </div>
 <div id="nav"></div>
 <div id="urlbar"><div class="u">localhost<i>:5000</i></div>
  <svg class="abs" style="left:30px;top:6px" width="32" height="32" viewBox="0 0 32 32"><circle cx="16" cy="16" r="12.6" fill="none" stroke="#5c5c5c" stroke-width="2.2"/><circle cx="16" cy="9.8" r="1.9" fill="#5c5c5c"/><rect x="14.4" y="13.4" width="3.2" height="9.8" fill="#5c5c5c"/></svg>
  <div class="abs" style="left:73px;top:6px;width:2px;height:32px;background:#c6c6c6"></div>
  <div class="abs" style="left:929px;top:6px;width:2px;height:32px;background:#c6c6c6"></div>
  <svg class="abs" style="left:946px;top:6px" width="32" height="32" viewBox="0 0 32 32"><path d="M24 13 A9.3 9.3 0 1 0 22.5 24" fill="none" stroke="#8593ab" stroke-width="3.6"/><path d="M27.5 4.5 L27.5 15.5 L16.5 15.5 Z" fill="#8593ab"/></svg>
 </div>
 <div id="search"><div class="s">Search</div>
  <svg class="abs" style="left:4px;top:3px" width="40" height="40" viewBox="0 0 40 40"><circle cx="14" cy="13" r="8.6" fill="none" stroke="#8b8b8b" stroke-width="3"/><path d="M20 19.5 L30.5 31" stroke="#8b8b8b" stroke-width="4" stroke-linecap="round"/></svg>
 </div>
 <div id="back"><svg class="abs" style="left:12px;top:13px" width="35" height="33.25" viewBox="0 0 40 38"><path d="M4 19 L19 4 L24.5 9.5 L18.5 15.5 L36 15.5 L36 22.5 L18.5 22.5 L24.5 28.5 L19 34 Z" fill="#5b5a57"/></svg></div>
 <svg class="abs" style="left:1400px;top:117px" width="458" height="80" viewBox="0 0 458 80" fill="#55544f">
  <polygon points="40.0,26.5 44.1,35.8 54.3,36.9 46.7,43.7 48.8,53.6 40.0,48.5 31.2,53.6 33.3,43.7 25.7,36.9 35.9,35.8" fill="none" stroke="#4e4d4a" stroke-width="3.8" stroke-linejoin="round"/>
  <rect x="70.5" y="22" width="1.6" height="34" fill="#cfcdca"/>
  <path d="M90.5 31.5 h9 l3 -5.5 l3 5.5 h9 q2 0 2 2 v17 q0 2 -2 2 h-24 q-2 0 -2 -2 v-17 q0 -2 2 -2 Z" fill="none" stroke="#55544f" stroke-width="3.4" stroke-linejoin="round"/><path d="M92 38 h21 M92 43.5 h21 M92 49 h21" stroke="#55544f" stroke-width="2.6"/><path d="M96.7 33 v18" stroke="#f2f1f0" stroke-width="1.4"/>
  <path d="M172 24 h12 v14 h8.5 l-14.5 14.5 l-14.5 -14.5 h8.5 Z"/>
  <path d="M254 24.5 L238.5 39.5 l2.6 2.6 L254 29.6 L266.9 42.1 l2.6 -2.6 Z M244.5 41.5 L254 32.5 L263.5 41.5 V54 h-5.5 v-9 h-8 v9 h-5.5 Z"/>
  <path d="M314 26 q0 -1.5 1.5 -1.5 h29 q1.500 0 1.500 1.5 v12 a16 14.500 0 0 1 -32 0 Z"/><path d="M321.500 34 L330 42 L338.500 34" fill="none" stroke="#f2f1f0" stroke-width="3.6"/>
  <rect x="373" y="8" width="1.6" height="64" fill="#dedcd9"/>
  <rect x="400" y="24" width="32" height="5.6" rx="2.600"/><rect x="400" y="35.200" width="32" height="5.600" rx="2.600"/><rect x="400" y="46.400" width="32" height="5.600" rx="2.600"/>
 </svg>
 <div id="sw">
  <h2>Table Setting API</h2>
  <div class="x" style="left:744px;top:110px;width:86px;height:32px;border-radius:16px;background:#7d8492;color:#fff;font:bold 20px/32px 'DejaVu Sans',sans-serif;text-align:center">0.0.1</div>
  <div class="x mono" style="left:40px;top:186px;font-size:24px;letter-spacing:-.45px">[ Base URL: / ]</div>
  <div class="x" style="left:40px;top:222px;font-size:24px;letter-spacing:.09px;color:#4990e2;text-decoration:underline">http://localhost:5000/swagger.json</div>
  <div class="x" style="left:40px;top:294px;font-size:28px;letter-spacing:-.025px">Swagger API for Table Setting, the best (and probably only) way to REST API your forks. Running with a sqlite_file database.</div>
  <div class="x" style="left:60px;top:462px;font:bold 48px 'DejaVu Sans',sans-serif">forks</div>
  <div class="x" style="left:216px;top:476px;font-size:28px;letter-spacing:.3px">Forks namespace operations</div>
  <div class="x" style="left:40px;top:556px;width:1758px;height:2px;background:#c6c8cc"></div>
  <svg class="x" style="left:1700px;top:476px" width="44" height="26" viewBox="0 0 44 26"><path d="M4 4 L22 20 L40 4" fill="none" stroke="#111" stroke-width="3.2"/></svg>
  <div class="op post" style="top:568px"><div class="m">POST</div><div class="p">/forks/</div><div class="o">post_forks_resource</div></div>
  <div class="op get" style="top:680px"><div class="m">GET</div><div class="p">/forks/</div><div class="o">get_forks_resource</div></div>
  <div class="op put" style="top:792px"><div class="m">PUT</div><div class="p">/forks/{id}</div><div class="o">put_fork_resource</div></div>
  <div class="op get" style="top:904px"><div class="m">GET</div><div class="p">/forks/{id}</div><div class="o">get_fork_resource</div></div>
  <div class="op del" style="top:1016px"><div class="m">DELETE</div><div class="p">/forks/{id}</div><div class="o">delete_fork_resource</div></div>
  <div class="x" style="left:40px;top:1188px;width:1758px;height:120px;border:2px solid #cdcfd2;border-radius:8px"></div>
  <div class="x" style="left:63px;top:1212px;font:bold 31px 'DejaVu Sans',sans-serif;color:#6e6e6e">Models</div>
  <svg class="x" style="left:1714px;top:1218px" width="44" height="26" viewBox="0 0 44 26"><path d="M4 4 L22 20 L40 4" fill="none" stroke="#111" stroke-width="3.2"/></svg>
 </div>
 <div id="sbt"></div><div id="sbh"><i></i></div>
</div>
</body>
</html>
